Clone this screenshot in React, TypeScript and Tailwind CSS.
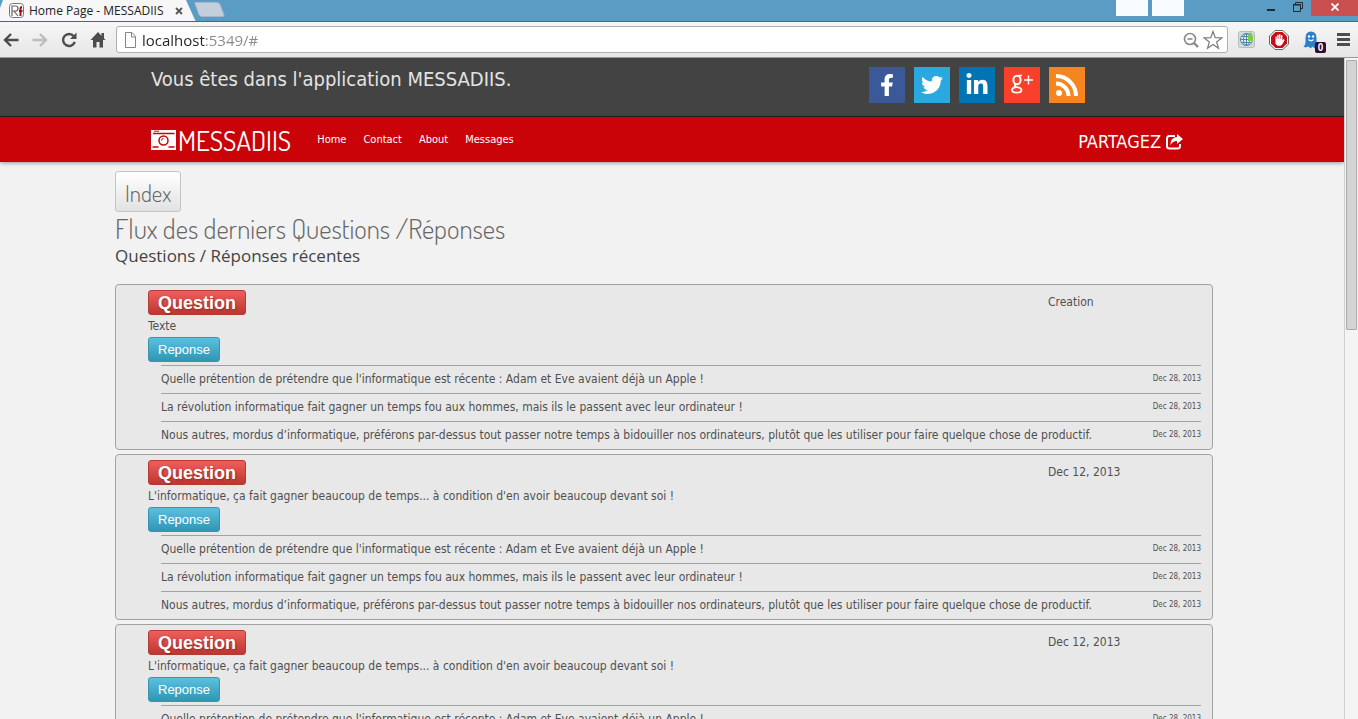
import type { ReactNode } from "react";
import { FaFacebookF, FaTwitter, FaLinkedinIn } from "react-icons/fa";

const TEXT_FONT = "font-['DejaVu_Sans_Condensed','DejaVu_Sans',sans-serif]";
const TITLE_FONT = "font-[Dosis,'Roboto_Condensed',sans-serif]";

const ANSWERS = [
  "Quelle prétention de prétendre que l'informatique est récente : Adam et Eve avaient déjà un Apple !",
  "La révolution informatique fait gagner un temps fou aux hommes, mais ils le passent avec leur ordinateur !",
  "Nous autres, mordus d’informatique, préférons par-dessus tout passer notre temps à bidouiller nos ordinateurs, plutôt que les utiliser pour faire quelque chose de productif.",
];

const QUOTE = "L'informatique, ça fait gagner beaucoup de temps... à condition d'en avoir beaucoup devant soi !";

const QUESTIONS = [
  { id: 1, text: "Texte", date: "Creation" },
  { id: 2, text: QUOTE, date: "Dec 12, 2013" },
  { id: 3, text: QUOTE, date: "Dec 12, 2013" },
];

function TabStrip() {
  return (
    <div className="flex h-[22px] items-stretch overflow-hidden border-b border-[#2f6f96] bg-[#5b9cc4]">
      <div className="relative -mb-px flex w-[198px] shrink-0 items-center">
        <svg className="absolute inset-0 h-full w-full" viewBox="0 0 198 22" preserveAspectRatio="none" aria-hidden="true">
          <path d="M0 22V8L3 0H186L195 20Q196 22 198 22Z" fill="#f7f7f7" />
        </svg>
        <svg className="relative ml-[9px] h-4 w-4" viewBox="0 0 16 16" aria-hidden="true">
          <rect x="0.5" y="0.5" width="14" height="14" rx="3" fill="#fff" stroke="#777" />
          <path d="M3 13V3h3.500q2.500 0 2.500 2.500T6.500 8H5l4 5M3 8h3" fill="none" stroke="#666" strokeWidth="1.200" />
          <path d="M11.500 13V5.500q0-1.500 1.500-1.500M10 8h3.500" fill="none" stroke="#a01018" strokeWidth="2" />
        </svg>
        <span className="relative ml-1 w-[144px] whitespace-nowrap font-['Open_Sans',sans-serif] text-xs text-[#222]">
          Home Page - MESSADIIS
        </span>
        <button aria-label="Fermer l'onglet" className="relative flex h-3 w-3 items-center justify-center">
          <svg className="h-2 w-2" viewBox="0 0 8 8" aria-hidden="true">
            <path d="M1 1l6 6M7 1L1 7" stroke="#555" strokeWidth="1.800" />
          </svg>
        </button>
      </div>
      <button aria-label="Nouvel onglet" className="-ml-1 flex items-start pt-[2px]">
        <svg className="h-[15px] w-[31px]" viewBox="0 0 31 15" aria-hidden="true">
          <path d="M1 1.500Q0 .5 2 .5H23Q25 .5 26 2.500L30 13Q30 14.500 28 14.500H8Q6 14.500 5 12.500Z" fill="#c3cfdb" stroke="#a3b8c9" />
        </svg>
      </button>
      <div className="ml-auto flex items-start">
        <span className="h-4 w-8 bg-[#f8fcff]" />
        <span className="ml-1 h-4 w-8 bg-[#f8fcff]" />
        <button aria-label="Réduire" className="ml-[74px] flex h-4 w-[26px] items-center justify-center">
          <svg className="h-3 w-3" viewBox="0 0 12 12" aria-hidden="true">
            <path d="M2 7h8v2H2z" fill="#1c2a33" />
          </svg>
        </button>
        <button aria-label="Restaurer" className="flex h-[14px] w-[27px] items-center justify-center">
          <svg className="h-3 w-3" viewBox="0 0 12 12" aria-hidden="true">
            <path d="M3.500 3V1.500h7v6H9M1.500 3.500h7v7h-7z" fill="none" stroke="#1c2a33" />
            <path d="M1 3h8v1.500H1z" fill="#1c2a33" />
          </svg>
        </button>
        <button aria-label="Fermer" className="flex h-4 w-[47px] items-center justify-center bg-[#c9504e] pb-[3px]">
          <svg className="h-2 w-2" viewBox="0 0 8 8" aria-hidden="true">
            <path d="M.5 .5l7 7M7.500 .5l-7 7" stroke="#fff" strokeWidth="1.800" />
          </svg>
        </button>
      </div>
    </div>
  );
}

function ToolButton({ label, children }: { label: string; children: ReactNode }) {
  return (
    <button aria-label={label} className="flex h-6 w-[29px] shrink-0 items-center justify-center">
      {children}
    </button>
  );
}

function Toolbar() {
  return (
    <div className="flex h-[35px] items-center bg-linear-to-b from-[#f7f7f7] to-[#e6e6e6] pr-1">
      <div className="-ml-1 flex w-[120px] shrink-0">
        <ToolButton label="Page précédente">
          <svg className="h-4 w-4" viewBox="0 0 16 16" fill="none" stroke="#4d4d4d" strokeWidth="2.400" aria-hidden="true">
            <path d="M15.500 8H2M8 2L2 8l6 6" />
          </svg>
        </ToolButton>
        <ToolButton label="Page suivante">
          <svg className="h-4 w-4" viewBox="0 0 16 16" fill="none" stroke="#bcbcbc" strokeWidth="2.400" aria-hidden="true">
            <path d="M.5 8H14M8 2l6 6-6 6" />
          </svg>
        </ToolButton>
        <ToolButton label="Actualiser">
          <svg className="h-4 w-4" viewBox="0 0 16 16" aria-hidden="true">
            <path d="M12.800 4.200A6 6 0 1 0 13.800 9.800" fill="none" stroke="#4d4d4d" strokeWidth="2.400" />
            <path d="M15.500 .5V7H9z" fill="#4d4d4d" />
          </svg>
        </ToolButton>
        <ToolButton label="Accueil">
          <svg className="h-4 w-4" viewBox="0 0 16 16" fill="#4d4d4d" aria-hidden="true">
            <path d="M8 0L.5 8H3v7.500h3.500V10h3v5.500H13V8h2.500L14 6.300V1h-2.500v2.700z" />
          </svg>
        </ToolButton>
      </div>
      <div className="flex h-[27px] min-w-0 flex-1 items-center rounded-[3px] border border-[#b0b0b0] bg-white px-1">
        <svg className="ml-[3px] h-4 w-[13px] shrink-0" viewBox="0 0 13 16" fill="none" stroke="#858585" aria-hidden="true">
          <path d="M1.500 .5h6.500l3.500 4v11h-10zM7.500 .5v4.500h4" />
        </svg>
        <input
          readOnly
          aria-label="Adresse"
          defaultValue="localhost:5349/#"
          className="ml-[5px] h-6 min-w-0 flex-1 bg-[linear-gradient(to_right,#222_63px,#888_63px)] bg-clip-text font-['Open_Sans',sans-serif] text-[15px] leading-6 text-transparent outline-none"
        />
        <button aria-label="Zoom" className="shrink-0">
          <svg className="h-4 w-4" viewBox="0 0 16 16" fill="none" stroke="#8a8a8a" aria-hidden="true">
            <circle cx="7" cy="7" r="5.500" strokeWidth="1.600" />
            <path d="M4.500 7h5" strokeWidth="1.600" />
            <path d="M11 11l4 4" strokeWidth="2.400" />
          </svg>
        </button>
        <button aria-label="Ajouter aux favoris" className="ml-1 shrink-0">
          <svg className="h-5 w-5" viewBox="0 0 20 20" aria-hidden="true">
            <path d="M10 1.500l2.300 6.200 6.500.2-5.200 4 1.900 6.300L10 14.500l-5.500 3.700 1.900-6.300-5.200-4 6.500-.2z" fill="#fff" stroke="#7a7a7a" strokeWidth="1.200" />
          </svg>
        </button>
      </div>
      <div className="flex shrink-0 items-center">
        <button aria-label="Traduction" className="ml-[10px]">
          <svg className="h-[17px] w-[17px]" viewBox="0 0 17 17" aria-hidden="true">
            <rect x="0.500" y="0.500" width="16" height="16" rx="2" fill="#d5d9dc" stroke="#b7bcc0" />
            <circle cx="8.500" cy="8.500" r="6" fill="#e7f0f5" stroke="#4d86a8" />
            <path d="M2.500 8.500h12M8.500 2.500v12M3.500 5.500h10M3.500 11.500h10" stroke="#4d86a8" />
            <ellipse cx="8.500" cy="8.500" rx="3" ry="6" fill="none" stroke="#4d86a8" />
            <path d="M10 4.500h1V2.500q1.500-2 3 0v2h1V10h-5z" fill="#7dcc45" />
          </svg>
        </button>
        <button aria-label="Bloqueur de publicités" className="ml-[14px]">
          <svg className="h-5 w-5" viewBox="0 0 20 20" aria-hidden="true">
            <path d="M6 .5h8L19.500 6v8L14 19.500H6L.5 14V6z" fill="#fff" stroke="#666" />
            <path d="M6.500 2h7L18 6.500v7L13.500 18h-7L2 13.500v-7z" fill="#c90d18" />
            <path d="M6.500 6.500h1.200V9h.5V4.800h1.400V9h.5V4.300h1.400V9h.5V5.300h1.400v5.200l1.300-1.400 1 .8-2.600 4.600-1.600 1.200H8.500l-2-2z" fill="#fff" />
          </svg>
        </button>
        <button aria-label="Ghostery" className="relative ml-[14px] mr-[14px]">
          <svg className="h-[18px] w-4" viewBox="0 0 16 18" aria-hidden="true">
            <path d="M2.500 7Q2.500 .5 8 .5T13.500 7v8l-2 2.500-2-2-2 2-2-2-3 1-2-1Q2.500 14 2.500 11z" fill="#2a80c8" />
            <circle cx="6" cy="5.500" r="1.200" fill="#fff" />
            <circle cx="10" cy="5.500" r="1.200" fill="#fff" />
            <path d="M5.500 8.500q2.500 2.500 5 0" fill="none" stroke="#fff" strokeWidth="1.200" />
          </svg>
          <span className="absolute left-3 top-[11px] h-[11px] w-[11px] rounded-[2px] bg-[#300b33] text-center font-['Liberation_Sans',sans-serif] text-[10px] font-bold leading-[11px] text-white">
            0
          </span>
        </button>
        <button aria-label="Menu" className="flex w-[21px] justify-center">
          <svg className="h-[13px] w-[13px]" viewBox="0 0 13 13" fill="#4d4d4d" aria-hidden="true">
            <path d="M0 0h13v3H0zM0 5h13v3H0zM0 10h13v3H0z" />
          </svg>
        </button>
      </div>
    </div>
  );
}

function SocialLinks() {
  const tile = "flex h-9 w-9 items-center justify-center text-white";
  return (
    <div className="flex gap-[9px]">
      <a href="#facebook" aria-label="Facebook" className={`${tile} bg-[#3b5998]`}>
        <FaFacebookF size={22} />
      </a>
      <a href="#twitter" aria-label="Twitter" className={`${tile} bg-[#2aa9e0]`}>
        <FaTwitter size={22} />
      </a>
      <a href="#linkedin" aria-label="LinkedIn" className={`${tile} bg-[#0073b2]`}>
        <FaLinkedinIn size={24} />
      </a>
      <a href="#google" aria-label="Google+" className={`${tile} bg-[#f9402b]`}>
        <svg className="h-6 w-6" viewBox="0 0 24 24" fill="none" stroke="#fff" aria-hidden="true">
          <ellipse cx="7" cy="7" rx="3.600" ry="4.300" strokeWidth="2" />
          <path d="M7.500 2.500H12" strokeWidth="1.500" />
          <path d="M6 11q-2.500 1.500 0 2.800 5.500 1 5.500 3.200 0 2.700-4.700 2.700T2 17q0-2.200 4-3" strokeWidth="1.800" />
          <path d="M18.500 2.500v9M14 7h9" strokeWidth="1.400" />
        </svg>
      </a>
      <a href="#rss" aria-label="RSS" className={`${tile} bg-[#f5861f]`}>
        <svg className="h-[22px] w-[22px]" viewBox="0 0 22 22" fill="none" stroke="#fff" strokeWidth="4" aria-hidden="true">
          <circle cx="3" cy="19" r="3" fill="#fff" stroke="none" />
          <path d="M0 9.500a12.500 12.500 0 0 1 12.500 12.500M0 2a20 20 0 0 1 20 20" />
        </svg>
      </a>
    </div>
  );
}

function SiteHeader() {
  return (
    <header>
      <div className="flex h-[59px] items-start justify-between border-b border-[#222] bg-[#434343] pl-[151px] pr-[259px] pt-[9px]">
        <p className="text-xl leading-6 text-[#e3e3e3]">Vous êtes dans l'application MESSADIIS.</p>
        <SocialLinks />
      </div>
      <div className="flex h-[45px] items-center bg-[#ca0308] pl-[151px] pr-[161px] text-white shadow-[0_1px_4px_rgba(0,0,0,0.4)]">
        <a href="#" className={`flex items-center ${TITLE_FONT} text-[27px] leading-8`}>
          <svg className="mr-[2px] h-5 w-[25px]" viewBox="0 0 25 20" aria-hidden="true">
            <path d="M0 0h25v20H0z" fill="#fff" />
            <path d="M2 3.500h21.500M1.500 17h6M17.500 17h6" fill="none" stroke="#ca0308" strokeWidth="1.500" />
            <path d="M3 1.200h5" stroke="#ca0308" />
            <circle cx="12.500" cy="10.500" r="4.500" fill="#fff" stroke="#ca0308" strokeWidth="1.500" />
            <path d="M10.500 10.500a2 2 0 0 1 2-2" fill="none" stroke="#ca0308" />
          </svg>
          MESSADIIS
        </a>
        <nav className="ml-[26px] flex gap-[17px] text-[11px] leading-4">
          <a href="#home">Home</a>
          <a href="#contact">Contact</a>
          <a href="#about">About</a>
          <a href="#messages">Messages</a>
        </nav>
        <a href="#partagez" className="ml-auto mt-1 flex items-center gap-[5px] text-lg leading-5">
          PARTAGEZ
          <svg className="h-4 w-[17px]" viewBox="0 0 17 16" aria-hidden="true">
            <path d="M9 2H3.500Q1 2 1 4.500v7.500Q1 14.500 3.500 14.500h8q2.500 0 2.500-2.500v-2" fill="none" stroke="#fff" strokeWidth="2" />
            <path d="M11 0l6 5-6 5V7Q6 7 4.500 11.500 4 3.500 11 3z" fill="#fff" />
          </svg>
        </a>
      </div>
    </header>
  );
}

function QuestionCard({ text, date }: { text: string; date: string }) {
  const button =
    "block h-[25px] rounded-[3px] border px-[9px] font-['Liberation_Sans',sans-serif] text-white";
  return (
    <article className="rounded border border-[#a0a4a0] bg-[#e8e8e8] pt-[5px]">
      <div className="flex items-start pl-8 pr-[89px]">
        <div className="min-w-0 flex-1">
          <button className={`${button} border-[#b53a35] bg-linear-to-b from-[#ee5f5b] to-[#bd362f] text-lg font-bold leading-5 [text-shadow:1px_1px_2px_rgba(0,0,0,0.3)]`}>
            Question
          </button>
          <p className="leading-[22px]">{text}</p>
          <button className={`${button} border-[#3a94b0] bg-linear-to-b from-[#5bc0de] to-[#2f96b4] text-[13px] leading-5`}>
            Reponse
          </button>
        </div>
        <time className="w-[75px] whitespace-nowrap leading-6">{date}</time>
      </div>
      <ul className="ml-[45px] mr-[11px] mt-[3px]">
        {ANSWERS.map((answer) => (
          <li key={answer} className="flex h-7 items-center justify-between border-t border-[#a0a4a0] pb-[2px]">
            <span>{answer}</span>
            <time className="text-[8px] leading-3">Dec 28, 2013</time>
          </li>
        ))}
      </ul>
    </article>
  );
}

function Page() {
  return (
    <div className={`min-w-0 flex-1 bg-[#f2f2f2] ${TEXT_FONT}`}>
      <SiteHeader />
      <main className="ml-[115px] mr-[131px] pt-[9px] text-xs text-[#505050]">
        <button className={`block h-[41px] rounded-[3px] border border-[#c4c4c4] bg-linear-to-b from-white to-[#e2e2e2] px-[9px] pt-[2px] ${TITLE_FONT} text-[23px] font-light leading-8 text-[#666]`}>
          Index
        </button>
        <h1 className={`${TITLE_FONT} text-[27px] font-light leading-8 text-[#666]`}>
          Flux des derniers Questions /Réponses
        </h1>
        <h2 className="font-['Open_Sans','Noto_Sans',sans-serif] text-[17px] leading-6 text-[#444]">
          Questions / Réponses récentes
        </h2>
        <section className="mt-4 flex flex-col gap-1">
          {QUESTIONS.map((question) => (
            <QuestionCard key={question.id} text={question.text} date={question.date} />
          ))}
        </section>
      </main>
    </div>
  );
}

export default function App() {
  return (
    <div className="flex h-screen flex-col overflow-hidden">
      <TabStrip />
      <Toolbar />
      <div className="flex min-h-0 flex-1 overflow-hidden border-t border-[#999]">
        <Page />
        <div className="w-[14px] shrink-0 border-l border-[#cfcfcf] bg-[#f4f4f4] px-px pt-[2px]">
          <div className="h-[270px] rounded-[1px] border border-[#aaa] bg-[#d4d4d4]" />
        </div>
      </div>
    </div>
  );
}
